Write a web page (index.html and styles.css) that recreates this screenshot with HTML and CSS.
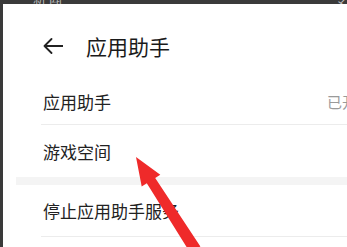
FILE: index.html
```html
<!DOCTYPE html>
<html lang="zh-CN">
<head>
<meta charset="utf-8">
<link rel="stylesheet" href="styles.css">
</head>
<body>
<div class="status">
  <span class="status-left">新 闻</span>
  <span class="status-right">令 </span>
</div>
<div class="screen">
  <div class="header">
    <svg class="back" width="20" height="16" viewBox="0 0 20 16">
      <path d="M20 8 H1.5 M8.5 1 L1.5 8 L8.5 15" fill="none" stroke="#222" stroke-width="1.8" stroke-linecap="round" stroke-linejoin="round"/>
    </svg>
    <span class="title">应用助手</span>
  </div>
  <div class="list first">
    <div class="row r1"><span class="label">应用助手</span><span class="value">已开启</span></div>
    <div class="row r2 noline"><span class="label">游戏空间</span></div>
  </div>
  <div class="gap"></div>
  <div class="list">
    <div class="row r3"><span class="label">停止应用助手服务</span></div>
  </div>
</div>
<svg class="arrow" width="347" height="247" viewBox="0 0 347 247">
  <polygon points="136,157 160.3,174.7 155.2,177.9 200.4,246.4 190.2,252.8 146.8,183.3 141.7,186.5" fill="#ef2a2a"/>
</svg>
</body>
</html>
```
FILE: styles.css
```css
html, body {
  margin: 0;
  padding: 0;
  width: 347px;
  height: 247px;
  overflow: hidden;
  background: #3a3a3a;
  font-family: "Noto Sans CJK SC", "Noto Sans", sans-serif;
  color: #1c1c1c;
  position: relative;
}
.status {
  height: 4px;
  overflow: hidden;
  display: flex;
  justify-content: space-between;
  color: #b8b8b8;
  font-size: 13px;
  line-height: 13px;
}
.status-left {
  margin: -9px 0 0 33px;
}
.status-right {
  margin: -9px 0 0 0;
}
.screen {
  margin-left: 3px;
  height: 243px;
  background: #ffffff;
}
.header {
  display: flex;
  align-items: center;
  padding: 30px 0 0 40px;
  height: 24px;
}
.back {
  display: block;
  flex: none;
}
.title {
  margin-left: 23px;
  font-size: 21px;
  line-height: 24px;
  color: #1a1a1a;
}
.list.first {
  margin-top: 22px;
}
.row {
  display: flex;
  align-items: center;
  margin-left: 38px;
  border-bottom: 1px solid #ececec;
  font-size: 17px;
  line-height: 22px;
  color: #222;
}
.row.noline {
  border-bottom: none;
}
.r1 { height: 44px; }
.r2 { height: 52px; padding-top: 1px; box-sizing: border-box; }
.r3 { height: 51px; }
.label { margin-left: 2px; }
.value {
  margin-left: auto;
  margin-right: -25px;
  color: #9a9a9a;
  font-size: 15px;
  white-space: nowrap;
}
.gap {
  height: 8px;
  margin-left: 13px;
  background: #f4f4f4;
}
.arrow {
  position: absolute;
  left: 0;
  top: 0;
  pointer-events: none;
}
```
